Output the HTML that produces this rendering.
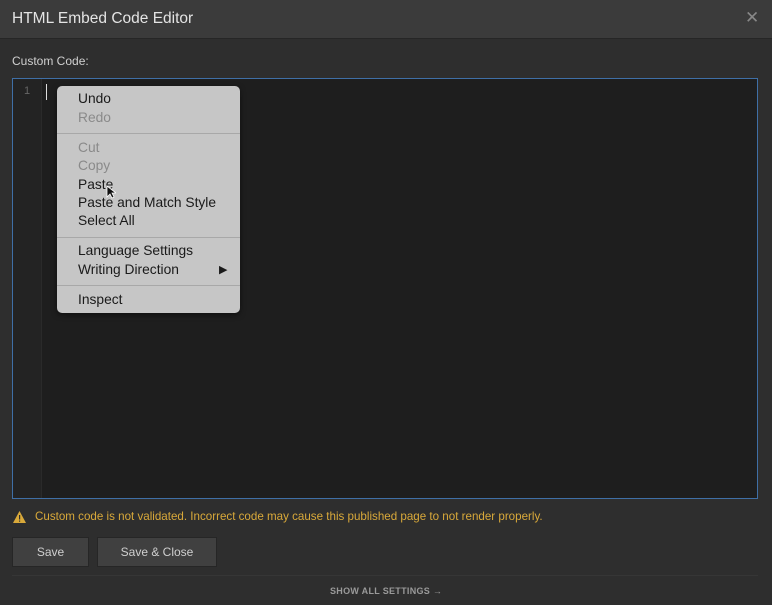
<!DOCTYPE html>
<html><head><style>
body{margin:0;width:772px;height:605px;background:#2e2e2e;font-family:"Liberation Sans",sans-serif;position:relative;overflow:hidden}
.t{position:absolute;white-space:nowrap}
.mi{position:absolute;left:78px;font-size:13.8px;color:#1a1a1a;line-height:16px}
.dis{color:#8a8a8a}
.sep{position:absolute;left:57px;width:183px;height:1px;background:#a8a8a8}
</style></head><body>
<div style="position:absolute;left:0;top:0;width:772px;height:38px;background:#3b3b3b;border-bottom:1px solid #262626"></div>
<div class="t" style="left:12px;top:10px;font-size:15.5px;color:#e4e4e4">HTML Embed Code Editor</div>
<div class="t" style="left:745px;top:8px;font-size:17px;color:#888">✕</div>
<div class="t" style="left:12px;top:54px;font-size:12px;color:#d0d0d0">Custom Code:</div>
<div style="position:absolute;left:12px;top:78px;width:744px;height:419px;background:#1e1e1e;border:1px solid #3f6fa6"></div>
<div style="position:absolute;left:13px;top:79px;width:28px;height:419px;background:#232323;border-right:1px solid #2a2a2a"></div>
<div class="t" style="left:24px;top:85px;font-size:11px;color:#666">1</div>
<div style="position:absolute;left:46px;top:84px;width:1px;height:16px;background:#ddd"></div>
<div style="position:absolute;left:57px;top:86px;width:183px;height:227px;background:#c6c6c6;border-radius:5px;box-shadow:0 2px 6px rgba(0,0,0,.5)"></div>
<div class="mi" style="top:91px">Undo</div>
<div class="mi dis" style="top:110px">Redo</div>
<div class="sep" style="top:133px"></div>
<div class="mi dis" style="top:140px">Cut</div>
<div class="mi dis" style="top:158px">Copy</div>
<div class="mi" style="top:177px">Paste</div>
<div class="mi" style="top:195px">Paste and Match Style</div>
<div class="mi" style="top:213px">Select All</div>
<div class="sep" style="top:237px"></div>
<div class="mi" style="top:243px">Language Settings</div>
<div class="mi" style="top:262px">Writing Direction</div>
<div class="t" style="left:219px;top:263px;font-size:11px;color:#1a1a1a">▶</div>
<div class="sep" style="top:285px"></div>
<div class="mi" style="top:292px">Inspect</div>
<svg style="position:absolute;left:106px;top:185px" width="10" height="14"><path d="M1 1v11l3-3 2 4 2-1-2-4h4z" fill="#111" stroke="#fff" stroke-width=".8"/></svg>
<svg style="position:absolute;left:13px;top:511px" width="13" height="12"><path d="M6.5 0L13 12H0z" fill="#d9a93a"/><rect x="6" y="4" width="1.2" height="4.5" fill="#2e2e2e"/><rect x="6" y="9.5" width="1.2" height="1.2" fill="#2e2e2e"/></svg>
<div class="t" style="left:35px;top:510px;font-size:11.6px;color:#d9a93a">Custom code is not validated. Incorrect code may cause this published page to not render properly.</div>
<div style="position:absolute;left:12px;top:537px;width:77px;height:30px;background:#404040;border:1px solid #262626;box-sizing:border-box;color:#cfcfcf;font-size:12px;text-align:center;line-height:28px">Save</div>
<div style="position:absolute;left:97px;top:537px;width:120px;height:30px;background:#404040;border:1px solid #262626;box-sizing:border-box;color:#cfcfcf;font-size:12px;text-align:center;line-height:28px">Save &amp; Close</div>
<div style="position:absolute;left:12px;top:575px;width:746px;height:1px;background:#363636"></div>
<div class="t" style="left:330px;top:586px;font-size:9px;font-weight:bold;color:#9a9a9a;letter-spacing:.3px">SHOW ALL SETTINGS →</div>
</body></html>
